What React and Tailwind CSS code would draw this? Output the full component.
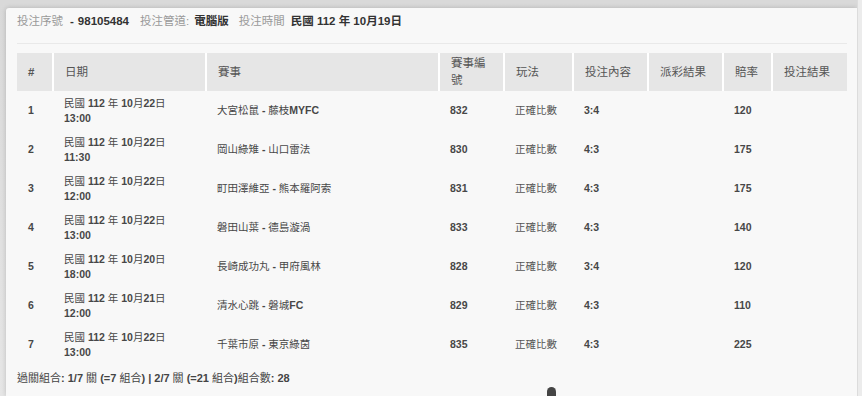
import React from "react";

const FONT = { fontFamily: '"Liberation Sans", Arial, "Noto Sans CJK TC", sans-serif' };

// CJK glyphs render at regular weight in the original, latin/digits stay bold
function Mixed({ text }) {
  const parts = text.split(/([\u3000-\u9fff\uff00-\uffef]+)/);
  return parts.map((p, i) =>
    i % 2 === 1 ? (
      <span key={i} className="font-normal">
        {p}
      </span>
    ) : (
      <span key={i}>{p}</span>
    )
  );
}

const rows = [
  { n: 1, date: "民國 112 年 10月22日", time: "13:00", game: "大宮松鼠 - 藤枝MYFC", id: "832", bet: "3:4", odds: "120" },
  { n: 2, date: "民國 112 年 10月22日", time: "11:30", game: "岡山綠雉 - 山口雷法", id: "830", bet: "4:3", odds: "175" },
  { n: 3, date: "民國 112 年 10月22日", time: "12:00", game: "町田澤維亞 - 熊本羅阿索", id: "831", bet: "4:3", odds: "175" },
  { n: 4, date: "民國 112 年 10月22日", time: "13:00", game: "磐田山葉 - 德島漩渦", id: "833", bet: "4:3", odds: "140" },
  { n: 5, date: "民國 112 年 10月20日", time: "18:00", game: "長崎成功丸 - 甲府風林", id: "828", bet: "3:4", odds: "120" },
  { n: 6, date: "民國 112 年 10月21日", time: "12:00", game: "清水心跳 - 磐城FC", id: "829", bet: "4:3", odds: "110" },
  { n: 7, date: "民國 112 年 10月22日", time: "13:00", game: "千葉市原 - 東京綠茵", id: "835", bet: "4:3", odds: "225" },
];

const cols = [
  { label: "#", w: 36 },
  { label: "日期", w: 153 },
  { label: "賽事", w: 233 },
  { label: "賽事編號", w: 65 },
  { label: "玩法", w: 69 },
  { label: "投注內容", w: 75 },
  { label: "派彩結果", w: 75 },
  { label: "賠率", w: 49 },
  { label: "投注結果", w: 75 },
];

export default function App() {
  return (
    <div
      className="relative h-[396px] w-[862px] overflow-hidden bg-gradient-to-b from-[#d9d9d9] to-[#e6e6e6] pl-[6px] pr-[5px] pt-[8px]"
      style={FONT}
    >
      <div className="h-full rounded-tl-[3px] bg-[#f8f8f8] pl-[11px] pr-[10px] pt-[5px] shadow-[0_0_5px_rgba(0,0,0,0.18)]">
        {/* bet info */}
        <div className="flex h-[18px] items-center text-[11.5px] text-[#9a9a9a]">
          <span>投注序號</span>
          <span className="ml-[7px] font-bold text-[#333]">-</span>
          <span className="ml-[4px] font-bold text-[#333]">98105484</span>
          <span className="ml-[11px]">投注管道:</span>
          <span className="ml-[5px] font-bold text-[#333]">電腦版</span>
          <span className="ml-[10px]">投注時間</span>
          <span className="ml-[6px] font-bold text-[#333]">民國 112 年 10月19日</span>
        </div>
        <div className="mt-[12px] h-px bg-[#e9e9e9]" />

        <table className="mt-[9px] w-[830px] table-fixed border-collapse">
          <colgroup>
            {cols.map((c) => (
              <col key={c.label} style={{ width: c.w }} />
            ))}
          </colgroup>
          <thead>
            <tr className="h-[38px] bg-[#e6e6e6]">
              {cols.map((c, i) => (
                <th
                  key={c.label}
                  className={[
                    "px-[11px] py-[2px] text-left align-middle text-[11.5px] leading-[17px] text-[#555]",
                    i > 0 ? "border-l-2 border-white font-normal" : "font-bold",
                  ].join(" ")}
                >
                  {c.label}
                </th>
              ))}
            </tr>
          </thead>
          <tbody className="text-[10.5px] font-bold leading-[15px] text-[#474747]">
            {rows.map((r) => (
              <tr key={r.n} className="h-[39px]">
                <td className="px-[11px] align-middle">{r.n}</td>
                <td className="px-[11px] align-middle">
                  <div>
                    <Mixed text={r.date} />
                  </div>
                  <div>{r.time}</div>
                </td>
                <td className="px-[11px] align-middle">
                  <Mixed text={r.game} />
                </td>
                <td className="px-[11px] align-middle">{r.id}</td>
                <td className="px-[11px] align-middle font-normal text-[#555]">正確比數</td>
                <td className="px-[11px] align-middle">{r.bet}</td>
                <td className="px-[11px] align-middle"></td>
                <td className="px-[11px] align-middle">{r.odds}</td>
                <td className="px-[11px] align-middle"></td>
              </tr>
            ))}
          </tbody>
        </table>

        <div className="mt-[6px] text-[11px] font-bold leading-[16px] text-[#444]">
          <Mixed text="過關組合: 1/7 關 (=7 組合) | 2/7 關 (=21 組合)組合數: 28" />
        </div>
      </div>

      {/* right scrollbar strip */}
      <div className="absolute right-0 top-0 h-full w-[5px] border-l border-[#dcdcdc] bg-[#ececec]" />
      {/* drag handle peeking at bottom */}
      <div className="absolute left-[547px] top-[387px] h-[14px] w-[9px] rounded-t-full bg-[#444]" />
    </div>
  );
}
